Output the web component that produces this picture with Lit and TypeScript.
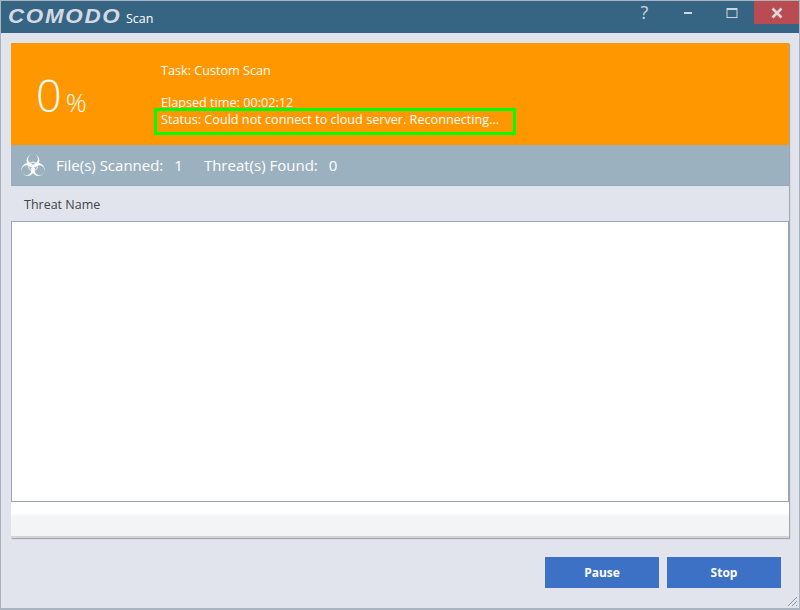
import { LitElement, html, svg, css } from "lit";
import { customElement } from "lit/decorators.js";

@customElement("app-root")
export class AppRoot extends LitElement {
  static styles = css`
    :host { display: block; width: 800px; height: 610px; overflow: hidden; font-family: "Open Sans", "Noto Sans", sans-serif; }
    .window { box-sizing: border-box; width: 800px; height: 610px; border: 1px solid #a9b4c0; border-bottom-width: 2px; background: #e1e4ed; display: flex; flex-direction: column; position: relative; }
    .title { height: 32px; flex: none; background: #366483; display: flex; align-items: flex-start; }
    .logo { margin: 3px 0 0 7px; width: 113px; font: italic bold 20px/24px "Liberation Sans", sans-serif; letter-spacing: 1.5px; color: #d4d9e2; transform-origin: left center; transform: scaleX(1.12); white-space: nowrap; }
    .app { margin: 9px 0 0 5px; font-size: 12.5px; line-height: 17px; color: #fff; }
    .controls { margin-left: auto; display: flex; height: 23px; align-items: center; color: #cfd5dd; }
    .ctl { width: 45px; height: 23px; display: flex; align-items: center; justify-content: center; }
    .help { font-size: 18px; line-height: 23px; padding-left: 6px; box-sizing: border-box; }
    .min { padding-left: 3px; box-sizing: border-box; }
    .close { background: #b94c50; }
    .panel { margin: 10px 10px 0 10px; height: 495px; flex: none; background: #fff; display: flex; flex-direction: column; box-shadow: 1px 1px 1px #a3a8b0; position: relative; }
    .orange { height: 102px; flex: none; background: #ff9800; color: #fff; display: flex; }
    .pct { width: 150px; flex: none; display: flex; align-items: baseline; padding: 22px 0 0 25px; box-sizing: border-box; font-weight: 300; }
    .num { font-size: 45px; line-height: 60px; }
    .sign { font-size: 26px; margin-left: 4px; }
    .info { padding-top: 19px; font-size: 12.65px; line-height: 17px; color: #fff; }
    .info div { white-space: nowrap; }
    .elapsed { margin-top: 15px; }
    .highlight { position: absolute; left: 143px; top: 65px; width: 362px; height: 27px; box-sizing: border-box; border: 3px solid #00ff00; }
    .stats { height: 41px; flex: none; background: #9bb1bf; color: #fff; display: flex; align-items: center; font-size: 15px; padding: 0 0 2px 9px; box-sizing: border-box; white-space: pre; }
    .bio { width: 26px; height: 26px; margin-right: 10px; flex: none; }
    .val { margin-left: 11px; }
    .threat { margin-left: 21px; }
    .head { height: 37px; margin-top: -1px; flex: none; box-sizing: border-box; background: #e1e4ed; border: 1px solid #98a8c0; border-width: 1px 0; display: flex; align-items: center; padding: 2px 0 0 13px; font-size: 12.5px; color: #444; }
    .list { flex: 1; background: #fff; border: 1px solid #9aa3b5; border-top: none; }
    .foot { height: 36px; flex: none; background: linear-gradient(#fff 0, #fff 11px, #f4f5f7 14px, #f2f3f5 100%); border-bottom: 2px solid #d4d4d6; box-sizing: border-box; }
    .buttons { display: flex; justify-content: flex-end; gap: 8px; margin: 19px 18px 0 0; }
    .btn { width: 114px; height: 31px; border: none; padding: 0; background: #3d71c5; color: #fff; font: 700 12px/31px "Open Sans", sans-serif; text-align: center; }
    .grip { position: absolute; right: 1px; bottom: 1px; width: 11px; height: 11px; }
  `;

  render() {
    const angles = [0, 120, 240];
    return html`
      <div class="window">
        <div class="title">
          <div class="logo">COMODO</div>
          <div class="app">Scan</div>
          <div class="controls">
            <div class="ctl help">?</div>
            <div class="ctl min">
              <svg width="12" height="12" viewBox="0 0 12 12"><rect x="2" y="5" width="8" height="2" fill="#cfd5dd"/></svg>
            </div>
            <div class="ctl">
              <svg width="12" height="12" viewBox="0 0 12 12"><rect x="1" y="1.5" width="10" height="9" fill="none" stroke="#cfd5dd"/><rect x="1" y="1" width="10" height="2" fill="#cfd5dd"/></svg>
            </div>
            <div class="ctl close">
              <svg width="12" height="12" viewBox="0 0 12 12"><path d="M1.5 1.5 L10.5 10.5 M10.5 1.5 L1.5 10.5" stroke="#dcd6d8" stroke-width="2.6" fill="none"/></svg>
            </div>
          </div>
        </div>
        <div class="panel">
          <div class="orange">
            <div class="pct"><span class="num">0</span><span class="sign">%</span></div>
            <div class="info">
              <div>Task:&nbsp;Custom Scan</div>
              <div class="elapsed">Elapsed time:&nbsp;00:02:12</div>
              <div>Status:&nbsp;Could not connect to cloud server. Reconnecting...</div>
            </div>
          </div>
          <div class="highlight"></div>
          <div class="stats">
            <svg class="bio" viewBox="0 0 26 26">
              ${angles.map((a) => svg`<circle cx="13" cy="8.6" r="6.4" fill="#fff" transform="rotate(${a} 13 14.5)"/>`)}
              ${angles.map((a) => svg`<g transform="rotate(${a} 13 14.5)" fill="#9bb1bf"><circle cx="13" cy="7" r="4.9"/><rect x="12.4" y="9" width="1.2" height="5"/></g>`)}
              <circle cx="13" cy="14.5" r="4.4" fill="none" stroke="#fff" stroke-width="1"/>
              <circle cx="13" cy="14.5" r="1.8" fill="#fff"/>
            </svg>
            <span>File(s) Scanned:</span><span class="val">1</span><span class="threat">Threat(s) Found:</span><span class="val">0</span>
          </div>
          <div class="head">Threat Name</div>
          <div class="list"></div>
          <div class="foot"></div>
        </div>
        <div class="buttons">
          <button class="btn">Pause</button>
          <button class="btn">Stop</button>
        </div>
        <svg class="grip" viewBox="0 0 11 11" stroke="#8d98a6" fill="none"><path d="M1 10 L10 1 M5 10 L10 5 M9 10 L10 9"/></svg>
      </div>
    `;
  }
}
